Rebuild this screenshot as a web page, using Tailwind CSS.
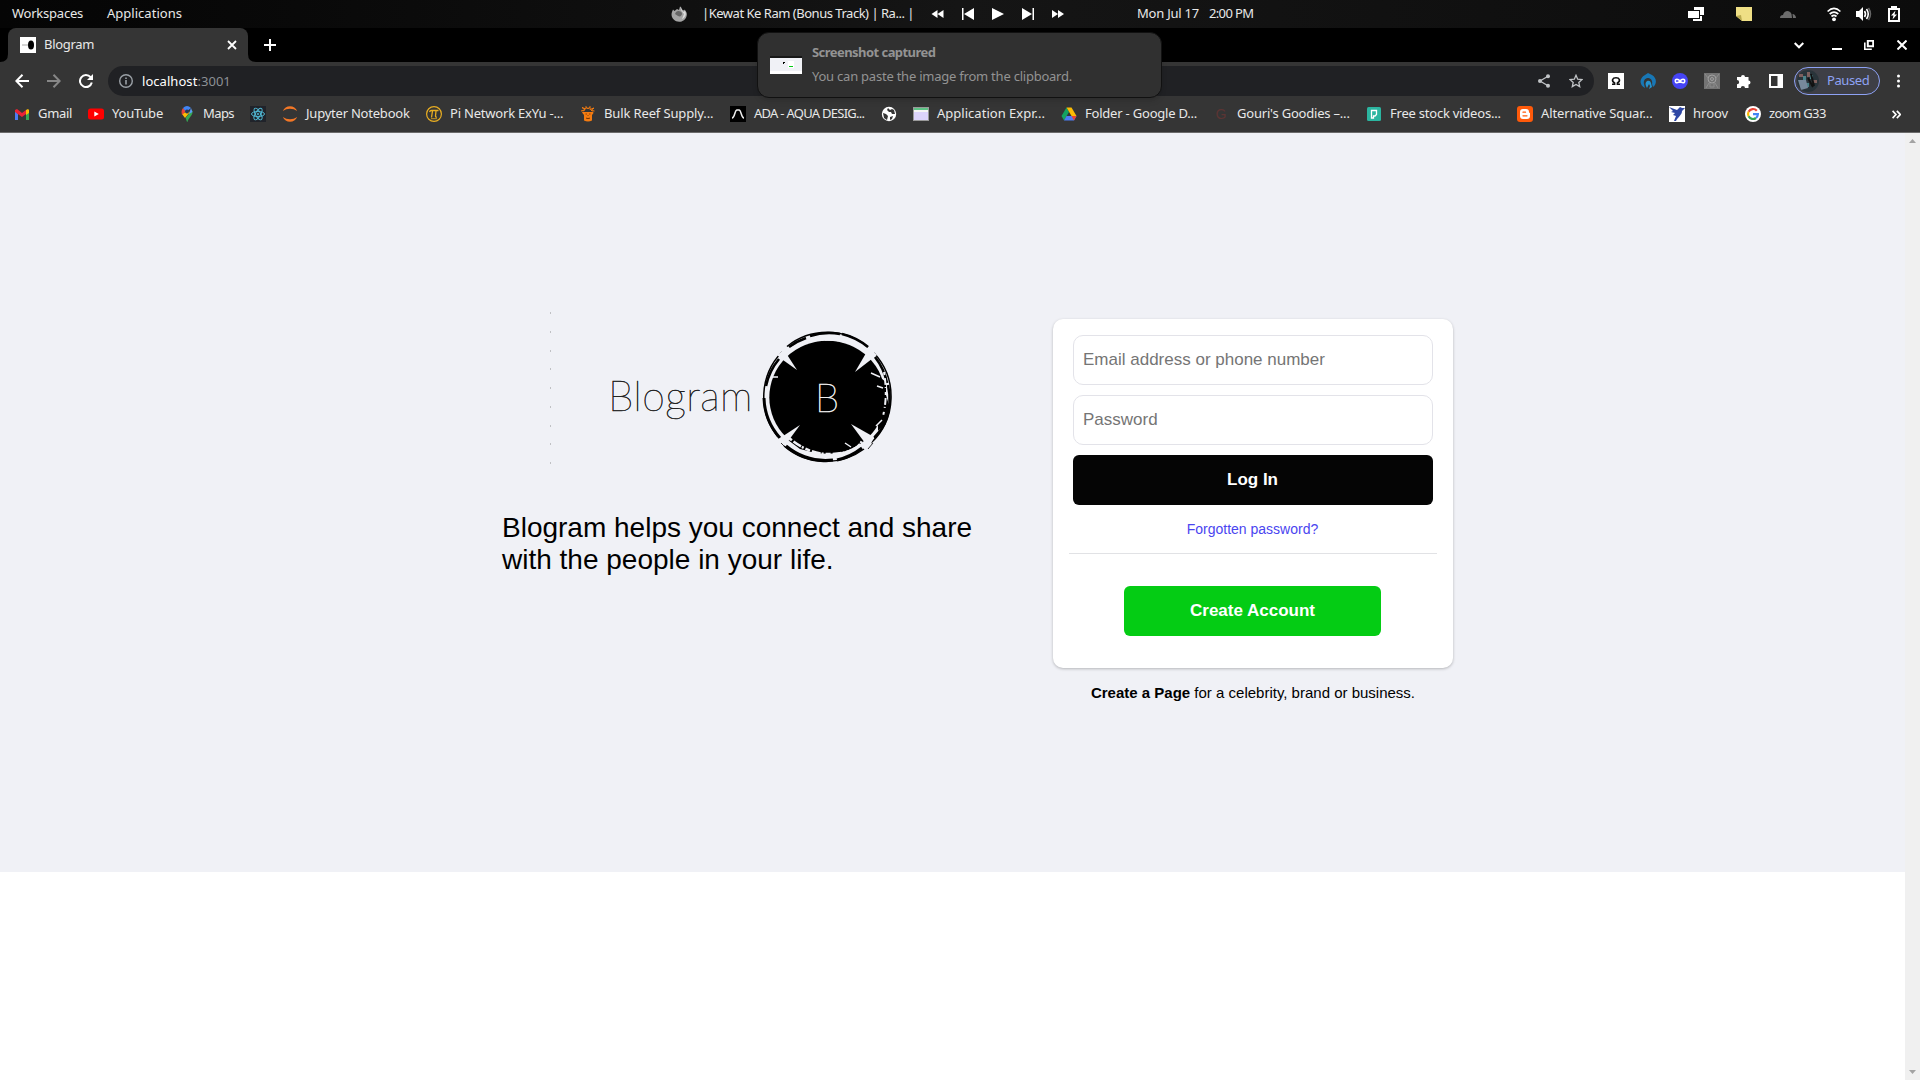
<!DOCTYPE html>
<html lang="en">
<head>
<meta charset="utf-8">
<title>Blogram</title>
<script src="https://cdn.jsdelivr.net/npm/@tailwindcss/browser@4"></script>
</head>
<body class="h-[1080px] w-[1920px] overflow-hidden bg-white font-['Noto_Sans',sans-serif] text-[13px] leading-4 whitespace-nowrap text-[#e8e8e8]">
<div class="relative flex h-full flex-col">

<!-- Desktop panel -->
<header class="flex h-7 shrink-0 items-center bg-[#0d0d0d] bg-linear-to-r from-[#050505] via-[#151515] to-[#0c0c0c]">
  <span class="ml-3 w-[71px] pb-0.5 tracking-[-0.23px]">Workspaces</span>
  <span class="ml-6 w-[75px] pb-0.5 tracking-[0.02px]">Applications</span>
  <svg class="ml-[489px] size-4" viewBox="0 0 16 16"><path d="M1 6 2 3.500l1.500 1.500L6 3l2 1 1-3.500 1 .5 1 2.500 2 1 .5-1c2 2 2.700 4 2.200 6-.7 4-4 6.300-7.500 6.300C3 15.800-.8 11 1 6z" fill="#a4a4a4"/><path d="M5 6c2-2 5-1 6 1 0 3-2 4-4 3L4 8z" fill="#666"/><path d="m9.500 1 1 4 2.500 3-2 5c3-1 5-5 3-8l-2 1z" fill="#ddd"/></svg>
  <span class="ml-[15px] w-[213px] pb-0.5 tracking-[-0.48px]">|Kewat Ke Ram (Bonus Track) | Ra... |</span>
  <div class="ml-4 flex items-center gap-[18px] fill-white">
    <svg class="h-3 w-[13px]" viewBox="0 0 12 12"><path d="M6 2v8L0 6zM12 2v8L6 6z"/></svg>
    <svg class="size-3" viewBox="0 0 12 12"><path d="M0 0h1.500v12H0zM12 0v12L2 6z"/></svg>
    <svg class="size-3" viewBox="0 0 12 12"><path d="M0 0v12l12-6z"/></svg>
    <svg class="size-3" viewBox="0 0 12 12"><path d="M10.500 0H12v12h-1.500zM0 0v12l10-6z"/></svg>
    <svg class="size-3" viewBox="0 0 12 12"><path d="M0 2v8l6-4zM6 2v8l6-4z"/></svg>
  </div>
  <span class="ml-[73px] w-[62px] pb-0.5 tracking-[-0.23px]">Mon Jul 17</span>
  <span class="ml-2.5 w-11 pb-0.5 tracking-[-0.65px]">2:00 PM</span>
  <svg class="ml-[435px] size-4" viewBox="0 0 16 16"><path d="M6 1h10v8h-4V4H6z" fill="#fff"/><path d="M0 5h11v7H0z" fill="#fff"/><path d="M5 13h7v-3h2v5H5z" fill="#fff"/></svg>
  <svg class="ml-8 size-4" viewBox="0 0 16 16"><path d="M0 1h16v14H6l-6-5z" fill="#efdf85"/><path d="m0 10 5-1 1 6z" fill="#b9a94e"/></svg>
  <svg class="ml-7 size-4" viewBox="0 0 16 16"><path d="M0 12c0-2 1-3 3-3 1-4 6-6 8.500-1l.5 4zM12.500 8c2 0 3.500 2 3.500 4h-3z" fill="#6c6c6c"/></svg>
  <svg class="ml-[31px] h-4 w-3.5" viewBox="0 0 14 16" fill="none" stroke="#fff" stroke-width="1.700"><path d="M.6 5.500c4-3.800 8.800-3.800 12.800 0M2.700 8c2.800-2.500 5.800-2.500 8.600 0M4.500 10.500c1.700-1.500 3.300-1.500 5 0"/><circle cx="7" cy="13.300" r="1.900" fill="#fff" stroke="none"/></svg>
  <svg class="ml-[15px] size-4" viewBox="0 0 16 16"><path d="M0 5h3l4-4v14l-4-4H0z" fill="#fff"/><path d="M8.500 5q2 3 0 6M10.500 3q3.500 5 0 10" fill="none" stroke="#fff" stroke-width="1.600"/><path d="M12.500 2q4 6 0 12" fill="none" stroke="#666" stroke-width="1.500"/></svg>
  <svg class="ml-4 h-4 w-3" viewBox="0 0 12 16"><path d="M3 0h6v2h3v14H0V2h3z" fill="#fff"/><path d="M2 4h8v10H2z" fill="#0d0d0d"/><path d="M7.500 4.500 3 9.500h2.500L4.500 13.500 9 8.500H6.500z" fill="#fff"/></svg>
</header>

<!-- Tab strip -->
<div class="flex h-[34px] shrink-0 items-end bg-black">
  <svg class="size-2" viewBox="0 0 8 8"><path d="M8 0v8H0q8 0 8-8" fill="#353535"/></svg>
  <div class="flex h-full w-60 items-center rounded-t-lg bg-[#353535] pl-3">
    <svg class="size-4 bg-white" viewBox="0 0 16 16"><path d="M2 8h6" stroke="#aaa"/><ellipse cx="11" cy="8" rx="3" ry="4.500"/></svg>
    <span class="ml-2 w-[183px] pb-0.5 tracking-[-0.3px]">Blogram</span>
    <svg class="size-2.5" viewBox="0 0 10 10" stroke="#fff" stroke-width="1.800"><path d="m1 1 8 8M9 1 1 9"/></svg>
  </div>
  <svg class="size-2" viewBox="0 0 8 8"><path d="M0 0v8h8Q0 8 0 0" fill="#353535"/></svg>
  <svg class="mb-[11px] ml-2 size-3" viewBox="0 0 12 12" stroke="#fff" stroke-width="2"><path d="M6 0v12M0 6h12"/></svg>
  <div class="mb-[11px] ml-auto flex h-3 items-center pr-[13px]">
    <svg class="mr-7 h-3 w-2.5" viewBox="0 0 10 12" fill="none" stroke="#fff" stroke-width="2"><path d="m.700 4 4.300 4.300L9.300 4"/></svg>
    <svg class="mr-[22px] h-3 w-2.5" viewBox="0 0 10 12"><path d="M0 9h10v2H0z" fill="#fff"/></svg>
    <svg class="mr-[23px] size-2.5" viewBox="0 0 10 10" fill="none" stroke="#fff" stroke-width="1.600"><path d="M3.800.800h5.400v5.400H3.800z" stroke-width="2"/><path d="M.8 2.500v6.700h7"/></svg>
    <svg class="size-2.5" viewBox="0 0 10 10" stroke="#fff" stroke-width="2"><path d="m.500.500 9 9M9.500.500l-9 9"/></svg>
  </div>
</div>

<!-- Toolbar -->
<div class="flex h-[38px] shrink-0 items-center bg-[#353535]">
  <svg class="ml-[15px] size-3.5" viewBox="0 0 14 14" fill="none" stroke="#fff" stroke-width="2"><path d="M14 7H1.500M7.500.700 1.300 7l6.200 6.300"/></svg>
  <svg class="ml-[18px] size-3.5" viewBox="0 0 14 14" fill="none" stroke="#878787" stroke-width="2"><path d="M0 7h12.500M6.500.700 12.700 7l-6.200 6.300"/></svg>
  <svg class="ml-[18px] size-3.5" viewBox="0 0 14 14"><path d="M11.600 3.200A6 6 0 1 0 12.800 8.500" fill="none" stroke="#fff" stroke-width="2"/><path d="M14 0v6H8z" fill="#fff"/></svg>
  <div class="ml-[15px] flex h-[30px] w-[1486px] items-center rounded-full bg-[#202124] pr-[11px] pl-[11px]">
    <svg class="size-3.5" viewBox="0 0 14 14"><circle cx="7" cy="7" r="6.300" fill="none" stroke="#9aa0a6" stroke-width="1.400"/><path d="M6.200 6h1.600v4.500H6.200zM6.200 3.500h1.600v1.500H6.200z" fill="#9aa0a6"/></svg>
    <span class="ml-[9px] pb-px tracking-[0.05px] text-white">localhost<span class="text-[#8c9095]">:3001</span></span>
    <svg class="mr-[19px] ml-auto h-3.5 w-3" viewBox="0 0 12 14"><g fill="#c0c3c6"><circle cx="10" cy="2.300" r="2"/><circle cx="2" cy="7" r="2"/><circle cx="10" cy="11.700" r="2"/></g><path d="m10 2.300-8 4.700 8 4.700" fill="none" stroke="#c0c3c6" stroke-width="1.300"/></svg>
    <svg class="size-3.5" viewBox="0 0 14 14"><path d="m7 1.300 1.700 3.900 4.300.400-3.200 2.800.9 4.200L7 10.400l-3.700 2.200.9-4.200L1 5.600l4.300-.4z" fill="none" stroke="#c0c3c6" stroke-width="1.300"/></svg>
  </div>
  <svg class="ml-3.5 size-4 bg-white" viewBox="0 0 16 16"><path d="M4 11.300h2.600V10C3 8 4.500 4.700 8 4.700S13 8 9.400 10v1.300H12" fill="none" stroke="#111" stroke-width="1.600"/></svg>
  <svg class="ml-4 size-4" viewBox="0 0 16 16"><path d="M5 15C-1 12-1 5 5 2l3-2 4 2c5 3 5 9 1 12l-1-3c1-4-2-6-4-6s-5 2-4 6z" fill="#1877b5"/><path d="M6 13c-2-5 4-7 5-3l1 4-3 2 1-3-1-2-2 4z" fill="#2693ce"/></svg>
  <svg class="ml-4 size-4" viewBox="0 0 16 16"><circle cx="8" cy="8" r="8" fill="#4544f5"/><path d="M8 8C6.200 5.800 3.300 5.500 3.300 8S6.200 10.200 8 8c1.800-2.200 4.700-2.500 4.700 0S9.800 10.200 8 8z" fill="none" stroke="#fff" stroke-width="1.600"/></svg>
  <svg class="ml-4 size-4 bg-[#747474]" viewBox="0 0 16 16" fill="none" stroke="#a0a0a0"><circle cx="8" cy="6" r="4"/><circle cx="8" cy="6" r="1.500"/><path d="M6 10v4h4v-4M1 1l3 4M15 1l-3 4M2 15l3-5M14 15l-3-5" stroke="#8c8c8c"/></svg>
  <svg class="ml-[17px] size-3.5" viewBox="0 0 14 14"><path d="M0 3h4a2 2 0 1 1 4 0h3.500v3.500a2 2 0 1 1 0 4V14H8a2 2 0 1 0-4.200 0H0v-3.700a2 2 0 1 0 0-4.300z" fill="#fff"/></svg>
  <svg class="ml-[18px] size-3.5" viewBox="0 0 14 14"><path d="M0 0h14v14H0z" fill="#fff"/><path d="M2 2h6.500v10H2z" fill="#353535"/></svg>
  <div class="ml-[11px] flex h-7 w-[86px] items-center rounded-full border border-[#8ea2f5] bg-[#3e3f46] pl-0.5">
    <svg class="size-[22px] rounded-full bg-[#29343a]" viewBox="0 0 22 22"><path d="M2 4h4v3H2zM10 2h3v5h-3zM15 10h5v3h-5z" fill="#7d5f5d"/><path d="M6 6h3v4H6zM13 5h3v4h-3zM9 13h3v4H9z" fill="#4b8289"/><path d="M1 10h8l2 8-7 2z" fill="#77899b"/><path d="m14 4 3 12M11 8l5 9" stroke="#111" stroke-width="2"/></svg>
    <span class="ml-2 pb-0.5 tracking-[-0.42px] text-[#8ea2f5]">Paused</span>
  </div>
  <svg class="ml-[17px] h-3.5 w-[3px]" viewBox="0 0 3 14" fill="#fff"><circle cx="1.500" cy="2" r="1.500"/><circle cx="1.500" cy="7" r="1.500"/><circle cx="1.500" cy="12" r="1.500"/></svg>
</div>

<!-- Bookmarks bar -->
<nav class="flex h-[33px] shrink-0 items-center gap-4 border-b border-[#6b6b6b] bg-[#353535] pb-1 pl-3.5 leading-[14px]">
  <div class="flex gap-2"><svg class="size-4" viewBox="0 0 16 16"><path d="M1 4v10h3V8z" fill="#4c7cf3"/><path d="M12 8v6h3V4z" fill="#34a853"/><path d="m1 4 2-1 5 4 4-3v4l-4 3-7-5z" fill="#ea2335"/><path d="m12 4 2-1 1 1v3l-3 2z" fill="#fbbc04"/></svg><span class="w-[34px] tracking-[-0.32px]">Gmail</span></div>
  <div class="flex gap-2"><svg class="size-4" viewBox="0 0 16 16"><rect y="2.500" width="16" height="11" rx="2.500" fill="#f00"/><path d="m6.300 5.500 4.500 2.500-4.500 2.500z" fill="#fff"/></svg><span class="w-[51px] tracking-[-0.22px]">YouTube</span></div>
  <div class="flex gap-2"><svg class="size-4" viewBox="0 0 16 16"><path d="M13.500 6c0 4-4 5.500-5 10-1 0-1-3-2-4L13 4z" fill="#34a853"/><path d="M3 8 8 5l3 1-5 6z" fill="#fbbc04"/><path d="M2.500 6q0-2 1.500-4l3 3-4 4z" fill="#ea4335"/><path d="M4 2q4-4 8 0L7 6z" fill="#4285f4"/><path d="m12 2 1.500 4L10 8z" fill="#5b9cf6"/><circle cx="8" cy="5.500" r="2" fill="#253858"/></svg><span class="w-[31px] tracking-[-0.58px]">Maps</span></div>
  <svg class="size-4 bg-[#20232a]" viewBox="0 0 16 16" fill="none" stroke="#53c1de" stroke-width=".9"><ellipse cx="8" cy="8" rx="6.500" ry="2.600"/><ellipse cx="8" cy="8" rx="6.500" ry="2.600" transform="rotate(60 8 8)"/><ellipse cx="8" cy="8" rx="6.500" ry="2.600" transform="rotate(120 8 8)"/><circle cx="8" cy="8" r=".8"/></svg>
  <div class="flex gap-2"><svg class="size-4" viewBox="0 0 16 16" fill="#f37726"><path d="M.8 5Q3 .3 8 .3T15.200 5Q12 2.800 8 2.800T.8 5zM.8 11Q3 15.700 8 15.700t7.200-4.700Q12 13.200 8 13.200T.8 11z"/></svg><span class="w-[104px] tracking-[-0.22px]">Jupyter Notebook</span></div>
  <div class="flex gap-2"><svg class="size-4" viewBox="0 0 16 16" fill="none" stroke="#e9ae22"><circle cx="8" cy="8" r="7.400" stroke-width="1.200"/><path d="M3.500 6q.5-1.500 2-1.500h7M6.500 5 5.500 11.500M10 5l-.5 5q0 1.500 1.500 1" stroke-width="1.300"/><path d="M5 12.700h6" stroke-width=".8"/></svg><span class="w-[114px] tracking-[-0.2px]">Pi Network ExYu -...</span></div>
  <div class="flex gap-2"><svg class="size-4" viewBox="0 0 16 16"><path d="M4 6h8l1-.5.500 1.500-1.500 2v5.500q-4 2-8 0V9L2 6.500 3 5.500z" fill="#f57c11"/><path d="m1 5 4-1-3-2.500 4 1.500V.5L8 3l2-2.500v3l4-1.500-3 2.500 3.500.5" fill="none" stroke="#f57c11"/><path d="M5.500 8h1.500M9 8h1.500M6 12q2 1 4 0M8 9v1" stroke="#7a3500" stroke-width=".8"/></svg><span class="w-[110px] tracking-[-0.13px]">Bulk Reef Supply...</span></div>
  <div class="flex gap-2"><svg class="size-4 bg-black" viewBox="0 0 16 16" fill="none" stroke="#eee" stroke-width="1.500"><path d="M2 12c3 0 2.500-8 5-8h2c2.500 0 2 8 5 8"/></svg><span class="w-[111px] tracking-[-0.73px]">ADA - AQUA DESIG...</span></div>
  <svg class="size-4" viewBox="0 0 16 16"><circle cx="8" cy="8" r="7.200" fill="#fff"/><path d="m2 7 3 1 2 2-1 4-3-2zM7 2l-1 2 2 2 2 0 1 2 3 0-1-4-2-1-2 1zM9 11l3-1-1 3-2 1z" fill="#353535"/></svg>
  <div class="flex gap-2"><svg class="size-4" viewBox="0 0 16 16"><rect x=".5" y="1.500" width="15" height="13" fill="#dcd3fb" stroke="#999"/><path d="M1 2h14v2H1z" fill="#5ec486"/><path d="M1 4h14v2H1z" fill="#f4f4f4"/></svg><span class="w-[108px] tracking-[0.02px]">Application Expr...</span></div>
  <div class="flex gap-2"><svg class="size-4" viewBox="0 0 16 16"><path d="M5.500 1.500 8 6l-5 8.500L.5 10z" fill="#14a261"/><path d="M5.500 1.500h5l5 8.500h-5z" fill="#fbbc04"/><path d="M3 14.500 5.500 10h10L13 14.500z" fill="#4c7cf3"/><path d="M15.500 10 13 14.500 10.500 10z" fill="#ea4335"/></svg><span class="w-[112px] tracking-[-0.21px]">Folder - Google D...</span></div>
  <div class="flex gap-2"><span class="flex size-4 items-center justify-center font-['Liberation_Sans',sans-serif] text-[14px] text-[#5c3433]">G</span><span class="w-[113px] tracking-[-0.2px]">Gouri's Goodies –...</span></div>
  <div class="flex gap-2"><svg class="size-4" viewBox="0 0 16 16"><rect x="1" y="1" width="14" height="14" rx="1.500" fill="#2bb5a0"/><path d="M5.500 12V4.500H10.500v4L9 10H7.500v2z" fill="none" stroke="#fff" stroke-width="1.300"/></svg><span class="w-[111px] tracking-[-0.22px]">Free stock videos...</span></div>
  <div class="flex gap-2"><svg class="size-4" viewBox="0 0 16 16"><rect width="16" height="16" rx="3" fill="#ff5a0a"/><path d="M6 3h3q3 0 3 3 0 1 1 1v3q0 3-3 3H6q-3 0-3-3V6q0-3 3-3z" fill="#fff"/><path d="M6 6.200h2.500M6 9.800h4" stroke="#ff5a0a" stroke-width="1.300" stroke-linecap="round"/></svg><span class="w-[112px] tracking-[-0.12px]">Alternative Squar...</span></div>
  <div class="flex gap-2"><svg class="size-4 bg-white" viewBox="0 0 16 16"><path d="m0 1 8 3 3-3 2 1 3 0-3 3c0 4-4 6-6 10H5l2-5-3-1 2-2-4-1 2-1z" fill="#2e47a5"/></svg><span class="w-9">hroov</span></div>
  <div class="flex gap-2"><svg class="size-4" viewBox="0 0 16 16" fill="none" stroke-width="2.200"><circle cx="8" cy="8" r="8" fill="#fff"/><path d="M11.800 4.700A5 5 0 0 0 3.600 5.700" stroke="#ea4335"/><path d="M3.600 5.700a5 5 0 0 0 0 4.600" stroke="#fbbc04"/><path d="M3.600 10.300a5 5 0 0 0 7.400 1.700" stroke="#34a853"/><path d="M11 12q1.800-1.500 1.900-3.800H8" stroke="#4285f4"/></svg><span class="w-[57px] tracking-[-0.62px]">zoom G33</span></div>
  <svg class="mr-[19px] ml-auto size-[9px]" viewBox="0 0 8 8" fill="none" stroke="#fff" stroke-width="1.500"><path d="m.500.800 3 3.200-3 3.200M4.300.800l3 3.200-3 3.200"/></svg>
</nav>

<!-- Page viewport -->
<div class="flex min-h-0 flex-1">
  <main class="flex-1 font-['Liberation_Sans',Arial,sans-serif] text-black">
    <div class="flex h-[739px] bg-[#f0f1f6]">
      <section class="ml-[502px] w-[551px] pt-[167px]">
        <div class="flex h-[190px] w-[500px]">
          <div class="mt-3 ml-[48px] flex h-[152px] w-px flex-col justify-between">
            <i class="h-0.5 bg-[#c0c1c4]"></i><i class="h-0.5 bg-[#c0c1c4]"></i><i class="h-0.5 bg-[#c0c1c4]"></i><i class="h-0.5 bg-[#c0c1c4]"></i><i class="h-0.5 bg-[#c0c1c4]"></i><i class="h-0.5 bg-[#c0c1c4]"></i><i class="h-0.5 bg-[#c0c1c4]"></i><i class="h-0.5 bg-[#c0c1c4]"></i><i class="h-0.5 bg-[#c0c1c4]"></i>
          </div>
          <span class="mt-[71px] ml-[57px] w-[150px] font-['Lato',sans-serif] text-[41px] leading-[50px] font-thin tracking-[0.4px] [-webkit-text-stroke:0.5px_#222]">Blogram</span>
          <svg class="mt-[28px] size-[138px]" viewBox="0 0 138 138">
            <!-- brushed outer ring, broken at the four diagonals -->
            <g fill="none" stroke="#000">
              <path d="M29 18.500A64 64 0 0 1 110 19M24 24A64 64 0 0 0 20 109M116 25A64 64 0 0 1 113 115M26 118A64 64 0 0 0 106 121" stroke-width="1.500"/>
              <path d="M31 19A62.500 62.500 0 0 1 48 10M52 8A64 64 0 0 1 82 6M84 6A64 64 0 0 1 110 19M21 31A62 62 0 0 0 8 58M117 29A62 62 0 0 1 129 55M130 57A62 62 0 0 1 128 92M127 95A64 64 0 0 1 116 110" stroke-width="2.600"/>
              <path d="M6 70A63 63 0 0 0 22 110M28 118A63 63 0 0 0 75 132M79 132A63 63 0 0 0 104 120" stroke-width="3"/>
            </g>
            <!-- solid disc with rough edge -->
            <ellipse cx="69.300" cy="69.300" rx="58" ry="56.500"/>
            <path d="M120 48l8 6v13l3 10-3 18-8 8zM30 112l12 9 12 3-4-8z"/>
            <g fill="none" stroke="#f0f1f6">
              <path d="M30 109Q50 127 74 126T104 113" stroke-width="2.500" stroke-dasharray="5 2 9 1 2 2"/>
              <path d="M126 44Q130 68 125 88" stroke-width="2" stroke-dasharray="3 3 7 2 1 4"/>
              <path d="M34 20Q50 11 72 12T103 21" stroke-width="1.600" stroke-dasharray="9 3 4 1"/>
              <path d="M13 49h7M113 45l9 4M119 58l6 2M118 98l6-6M87 115l6 4" stroke-width="1.500"/>
            </g>
            <g fill="#f0f1f6"><path d="m19 27 7-5 13 20-14-10z"/><path d="m111 20 8 7-22 17z"/><path d="m19 112 23-15-14 19-4 2z"/><path d="m116 109-23-13 14 19 5 3z"/></g>
            <path d="M23 115l5 5M110 121l5-6" stroke="#000" stroke-width=".8"/>
            <text x="57" y="84" fill="#eee" stroke="#eee" stroke-width=".7" font-family="Lato" font-weight="100" font-size="40" textLength="24" lengthAdjust="spacingAndGlyphs">B</text>
          </svg>
        </div>
        <p class="mt-[22px] text-[28px] leading-8">Blogram helps you connect and share<br>with the people in your life.</p>
      </section>
      <section class="w-[400px] pt-[186px] text-center">
        <form class="flex h-[349px] flex-col items-center rounded-[10px] bg-white pt-4 shadow-[0_1px_3px_rgba(0,0,0,0.25)]">
          <input class="h-[50px] w-[360px] rounded-[10px] border border-[#e3e3e9] px-[9px] text-[17px] placeholder:text-[#757575]" placeholder="Email address or phone number">
          <input class="mt-2.5 h-[50px] w-[360px] rounded-[10px] border border-[#e3e3e9] px-[9px] text-[17px] placeholder:text-[#757575]" placeholder="Password">
          <button class="mt-2.5 h-[50px] w-[360px] rounded-md bg-[#050505] pr-px text-[17px] font-bold text-white">Log In</button>
          <a class="mt-4 mr-px text-[14px] text-[#4a45f0]">Forgotten password?</a>
          <hr class="mt-4 w-[368px] border-[#e1e2e5]">
          <button class="mt-8 mr-px h-[50px] w-[257px] rounded-md bg-[#04cc14] text-[17px] font-bold text-white">Create Account</button>
        </form>
        <p class="mt-[17px] text-[15px]"><b>Create a Page</b> for a celebrity, brand or business.</p>
      </section>
    </div>
  </main>
  <div class="flex w-[15px] flex-col items-center justify-between bg-[#f0f0f0] py-1.5">
    <svg class="h-1 w-[7px]" viewBox="0 0 7 4"><path d="M0 4 3.500 0 7 4z" fill="#a3a3a3"/></svg>
    <svg class="h-1 w-[7px]" viewBox="0 0 7 4"><path d="m0 0 3.500 4L7 0z" fill="#a3a3a3"/></svg>
  </div>
</div>

<!-- Screenshot notification -->
<aside class="absolute top-8 left-[757px] flex h-[66px] w-[405px] rounded-xl border border-[#111] bg-[#303030] shadow-md">
  <svg class="mt-[23px] ml-3 h-[18px] w-8" viewBox="0 0 32 18"><path d="M0 0h32v18H0z" fill="#fff"/><path d="M0 0h32v2H0z" fill="#171717"/><path d="M0 2h32v13H0z" fill="#f0f1f6"/><path d="M13 6h2v1h-1v1h-1z"/><path d="M18 5h6v7h-6z" fill="#fff"/><path d="M19 10h4v1h-4z" fill="#04cc14"/></svg>
  <div class="pt-[11px] pl-2.5 text-[#939393]">
    <p class="font-bold tracking-[-0.55px]">Screenshot captured</p>
    <p class="mt-2 tracking-[-0.23px]">You can paste the image from the clipboard.</p>
  </div>
</aside>
</div>
</body>
</html>
